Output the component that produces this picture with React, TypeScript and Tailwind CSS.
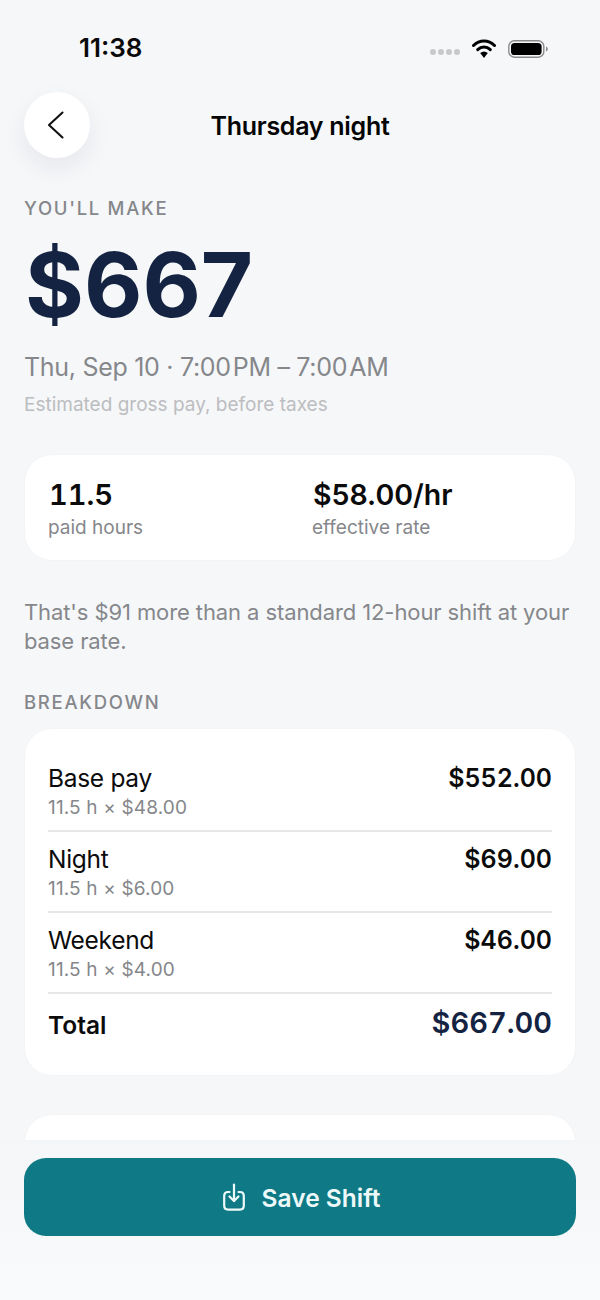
import React from "react";

const font = { fontFamily: 'Inter, "Liberation Sans", sans-serif' };

function Row({ name, sub, amount }: { name: string; sub: string; amount: string }) {
  return (
    <div className="flex h-[81px] justify-between border-b-2 border-[#e6e7e9] pt-[12px]">
      <div>
        <div className="text-[24.5px] leading-[30px] text-[#0b0b0c] tracking-[-0.3px]">{name}</div>
        <div className="text-[19px] leading-[30px] tracking-[0.15px] text-[#85878b]">{sub}</div>
      </div>
      <div className="text-[25px] leading-[30px] font-semibold text-[#0b0b0c] tabular-nums">{amount}</div>
    </div>
  );
}

export default function App() {
  return (
    <div style={font} className="relative h-[1300px] w-[600px] overflow-hidden bg-[#f6f7f9]">
      <div className="flex h-[92px] items-start justify-between pl-[79px] pr-[52px] pt-[32px]">
        <span className="text-[26px] leading-[32px] font-semibold text-[#0a0a0a]">11:38</span>
        <div className="mt-[7px] flex items-center">
          <div className="mr-[12px] mt-[7px] flex gap-[2px]">
            <span className="h-[6px] w-[6px] rounded-full bg-[#c8c9cb]" />
            <span className="h-[6px] w-[6px] rounded-full bg-[#c8c9cb]" />
            <span className="h-[6px] w-[6px] rounded-full bg-[#c8c9cb]" />
            <span className="h-[6px] w-[6px] rounded-full bg-[#c8c9cb]" />
          </div>
          <svg width="24" height="19" viewBox="0 0 24 19" fill="none" className="mr-[12px]">
            <path d="M1.5 6.5C7.5 .6 16.5 .6 22.5 6.5" stroke="#000" strokeWidth="3" strokeLinecap="round" />
            <path d="M5.7 10.6C9.4 7 14.6 7 18.3 10.6" stroke="#000" strokeWidth="3" strokeLinecap="round" />
            <path d="M8.2 14C10.6 12 13.4 12 15.8 14L12 19Z" fill="#000" />
          </svg>
          <svg width="40" height="18" viewBox="0 0 40 18" fill="none">
            <rect x="0.8" y="0.8" width="35" height="16.4" rx="5.5" stroke="#8a8a8c" strokeWidth="1.4" />
            <rect x="3" y="3" width="30.6" height="12" rx="3.6" fill="#000" />
            <path d="M38 6.5C39.2 7 39.8 8 39.8 9C39.8 10 39.2 11 38 11.5Z" fill="#8a8a8c" />
          </svg>
        </div>
      </div>

      <div className="relative flex h-[66px] items-center justify-center">
        <div className="absolute left-[24px] top-0 flex h-[66px] w-[66px] items-center justify-center rounded-full bg-white shadow-[0_10px_24px_rgba(20,30,50,0.07)]">
          <svg width="17" height="28" viewBox="0 0 17 28" fill="none" className="mr-[4px]">
            <path d="M15.5 1.5L2 14L15.5 26.5" stroke="#111" strokeWidth="2.1" strokeLinecap="round" strokeLinejoin="round" />
          </svg>
        </div>
        <span className="mt-[1px] text-[25px] leading-[32px] font-semibold tracking-[-0.28px] text-[#050505]">Thursday night</span>
      </div>

      <div className="px-[24px]">
        <div className="mt-[38px] text-[18.5px] leading-[24px] font-medium tracking-[1.7px] text-[#85878b]">YOU'LL MAKE</div>
        <div className="ml-[1px] mt-[12px] text-[90px] leading-[106px] font-bold text-[#132341]">$667</div>
        <div className="mt-[13px] text-[25px] leading-[32px] tracking-[-0.3px] text-[#85878b]">Thu, Sep 10 · 7:00{"\u200a"}PM – 7:00{"\u200a"}AM</div>
        <div className="mt-[10px] text-[19px] leading-[24px] text-[#bcbdc0]">Estimated gross pay, before taxes</div>

        <div className="mt-[37px] flex h-[107px] w-[552px] rounded-[28px] border border-[#f3f4f6] bg-white pl-[23px] pt-[22px]">
          <div className="w-[264px]">
            <div className="ml-[1px] text-[29px] leading-[36px] font-semibold text-[#0b0b0c] tabular-nums">11.5</div>
            <div className="mt-[2px] text-[19px] leading-[26px] text-[#85878b]">paid hours</div>
          </div>
          <div>
            <div className="ml-[1px] text-[28.5px] leading-[36px] font-semibold text-[#0b0b0c]">$58.00/hr</div>
            <div className="mt-[2px] text-[19px] leading-[26px] text-[#85878b]">effective rate</div>
          </div>
        </div>

        <p className="mt-[37px] w-[552px] text-[22px] leading-[29px] tracking-[-0.1px] text-[#85878b]">
          That's $91 more than a standard 12-hour shift at your base rate.
        </p>

        <div className="mt-[34px] text-[18.5px] leading-[24px] font-medium tracking-[1.7px] text-[#85878b]">BREAKDOWN</div>

        <div className="mt-[14px] h-[348px] w-[552px] rounded-[28px] border border-[#f3f4f6] bg-white px-[23px] pt-[22px]">
          <Row name="Base pay" sub="11.5 h × $48.00" amount="$552.00" />
          <Row name="Night" sub="11.5 h × $6.00" amount="$69.00" />
          <Row name="Weekend" sub="11.5 h × $4.00" amount="$46.00" />
          <div className="flex items-start justify-between pt-[10px]">
            <span className="mt-[2px] text-[24.5px] leading-[38px] font-semibold text-[#0b0b0c]">Total</span>
            <span className="text-[29px] leading-[38px] font-semibold text-[#132341] tabular-nums">$667.00</span>
          </div>
        </div>

        <div className="mt-[38px] h-[100px] w-[552px] rounded-[28px] border border-[#f3f4f6] bg-white" />
      </div>

      <div className="absolute bottom-0 left-0 right-0 h-[160px] bg-gradient-to-b from-[#f5f6f7] to-[#f9fafb] px-[24px] pt-[18px]">
        <button className="flex h-[78px] w-[552px] items-center justify-center gap-[17px] rounded-[22px] bg-[#0f7a85] pl-[3px]">
          <svg width="22" height="28" viewBox="0 0 22 28" fill="none" stroke="#eef9fa" strokeWidth="2.2" strokeLinecap="round" strokeLinejoin="round">
            <path d="M6.5 9H5C2.5 9 1.2 10.5 1.2 13V22.5C1.2 25 2.5 26.6 5 26.6H17C19.5 26.6 20.8 25 20.8 22.5V13C20.8 10.5 19.5 9 17 9H15.5" />
            <path d="M11 1.5V18" />
            <path d="M6.5 13.5L11 18L15.5 13.5" />
          </svg>
          <span className="mt-[1px] text-[24.5px] leading-[32px] font-semibold text-[#eef9fa]">Save Shift</span>
        </button>
      </div>
    </div>
  );
}
